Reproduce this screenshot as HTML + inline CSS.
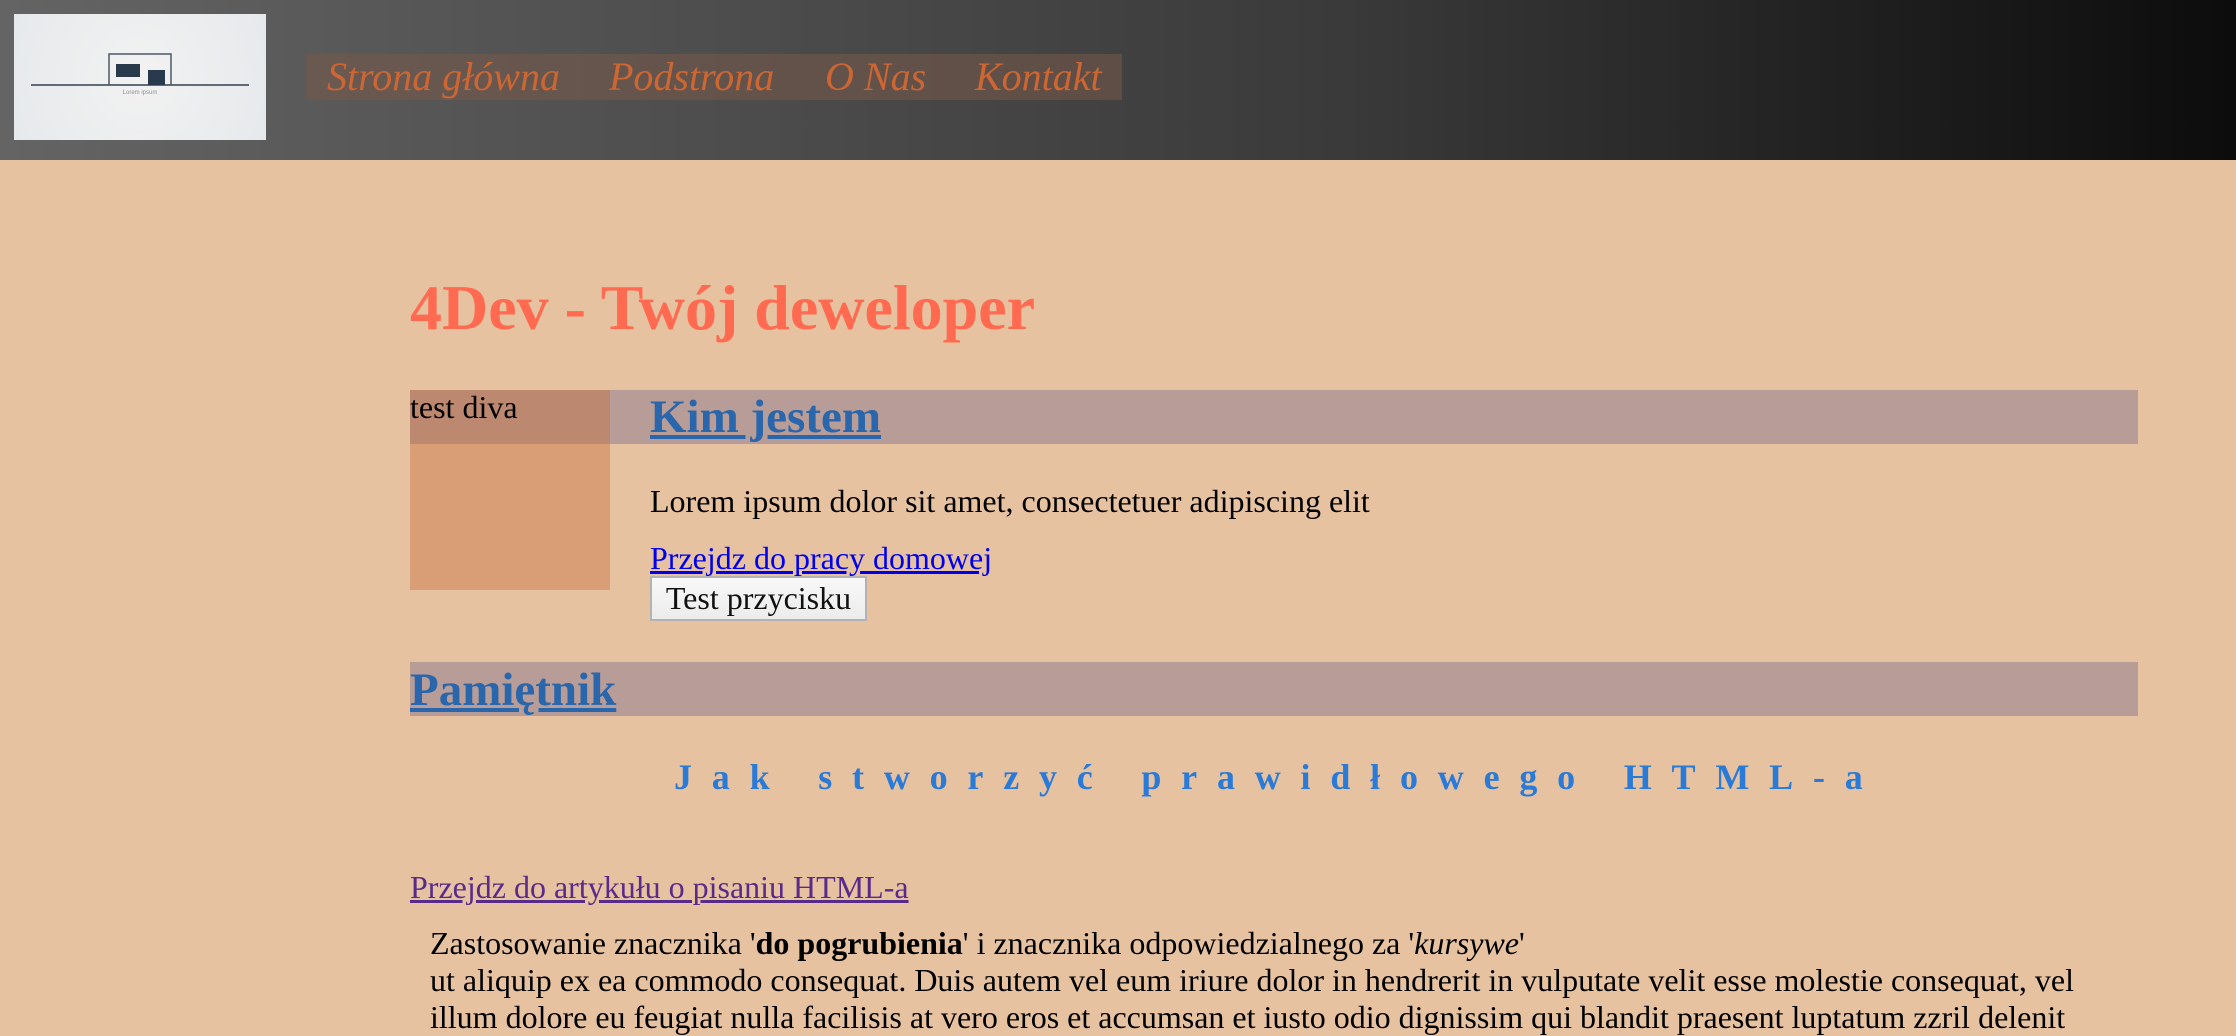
<!DOCTYPE html>
<html><head><meta charset="utf-8"><style>
html,body{margin:0;padding:0;width:2236px;height:1028px;overflow:hidden;background:#e6c2a1;font-family:"Liberation Serif",serif;}
.hdr{position:absolute;left:0;top:0;width:2236px;height:160px;background:linear-gradient(90deg,#646464 0%,#595959 15%,#3a3a3a 60%,#0c0c0c 100%);}
.logo{position:absolute;left:14px;top:14px;width:252px;height:126px;background:radial-gradient(circle,#f2f2f1 0%,#e6e9ec 100%);}
.nav{position:absolute;left:306px;top:54px;width:816px;height:46px;background:rgba(120,90,75,.55);}
.nav span{position:absolute;top:0;font-style:italic;font-size:40px;line-height:46px;color:#cc6633;}
.t{position:absolute;white-space:nowrap;}
</style></head><body>
<div class="hdr">
 <div class="logo">
  <svg width="252" height="126" viewBox="0 0 252 126">
   <line x1="17" y1="71" x2="235" y2="71" stroke="#33404f" stroke-width="1.5"/>
   <polyline points="95,71 95,40 157,40 157,71" fill="none" stroke="#4a5868" stroke-width="1.5"/>
   <rect x="102" y="50" width="24" height="13" fill="#2a3a4d"/>
   <rect x="134" y="56" width="17" height="15" fill="#2a3a4d"/>
   <text x="126" y="80" font-size="6" text-anchor="middle" fill="#8a9199" font-family="Liberation Sans">Lorem ipsum</text>
  </svg>
 </div>
 <div class="nav">
  <span style="left:21px">Strona główna</span>
  <span style="left:303px">Podstrona</span>
  <span style="left:519px">O Nas</span>
  <span style="left:669px">Kontakt</span>
 </div>
</div>

<div class="t" style="left:410px;top:268px;font-size:64px;font-weight:bold;color:#ff6a50;line-height:80px;">4Dev - Twój deweloper</div>

<div style="position:absolute;left:410px;top:390px;width:200px;height:200px;background:#d99e76"></div>
<div style="position:absolute;left:410px;top:390px;width:200px;height:54px;background:#bd8870"></div>
<div style="position:absolute;left:610px;top:390px;width:1528px;height:54px;background:#b89c98"></div>
<div class="t" style="left:410px;top:389px;font-size:32px;line-height:36px;">test diva</div>
<div class="t" style="left:650px;top:387px;font-size:47px;font-weight:bold;color:#2a66ab;text-decoration:underline;line-height:60px;">Kim jestem</div>
<div class="t" style="left:650px;top:483px;font-size:32px;line-height:36px;">Lorem ipsum dolor sit amet, consectetuer adipiscing elit</div>
<div class="t" style="left:650px;top:540px;font-size:32px;line-height:36px;color:#0000ee;text-decoration:underline;">Przejdz do pracy domowej</div>
<div style="position:absolute;left:650px;top:576px;width:213px;height:41px;border:2px solid #b3b3b3;background:linear-gradient(#f8f8f8,#ececec);font-size:32px;line-height:41px;text-align:center;color:#111;">Test przycisku</div>

<div style="position:absolute;left:410px;top:662px;width:1728px;height:54px;background:#b89c98"></div>
<div class="t" style="left:410px;top:660px;font-size:47px;font-weight:bold;color:#2a66ab;text-decoration:underline;line-height:60px;">Pamiętnik</div>

<div class="t" style="left:674px;top:755px;font-size:36px;font-weight:bold;color:#2a7ad8;letter-spacing:19.8px;line-height:44px;">Jak stworzyć prawidłowego HTML-a</div>

<div class="t" style="left:410px;top:869px;font-size:32px;line-height:36px;color:#5a2a8a;text-decoration:underline;">Przejdz do artykułu o pisaniu HTML-a</div>

<div class="t" style="left:430px;top:925px;font-size:32px;line-height:37px;">Zastosowanie znacznika '<b>do pogrubienia</b>' i znacznika odpowiedzialnego za '<i>kursywe</i>'<br>ut aliquip ex ea commodo consequat. Duis autem vel eum iriure dolor in hendrerit in vulputate velit esse molestie consequat, vel<br>illum dolore eu feugiat nulla facilisis at vero eros et accumsan et iusto odio dignissim qui blandit praesent luptatum zzril delenit</div>
</body></html>
